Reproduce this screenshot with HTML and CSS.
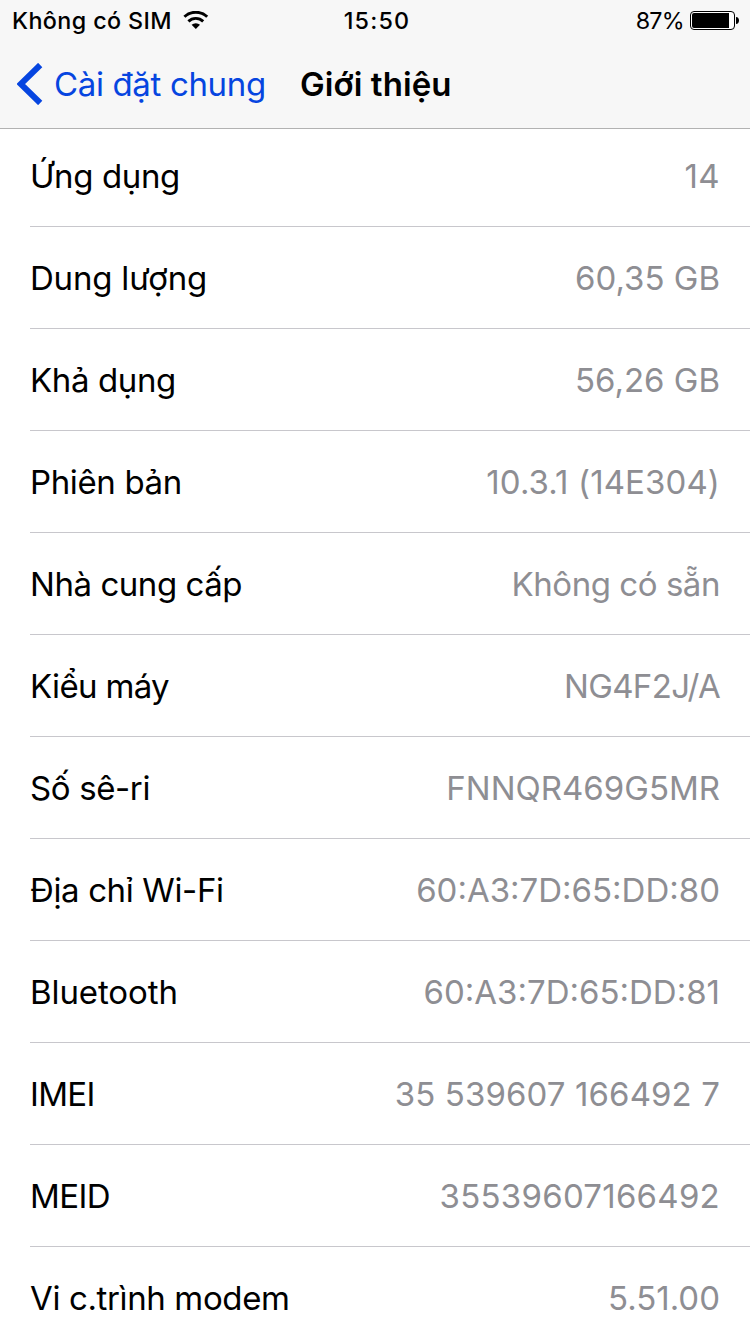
FILE: index.html
```html
<!DOCTYPE html>
<html lang="vi">
<head>
    <meta charset="UTF-8">
    <title>Giới thiệu</title>
    <link rel="stylesheet" href="styles.css">
</head>
<body>
    <header class="header">
        <div class="status">
            <div class="carrier">
                <span>Không có SIM</span>
                <svg class="wifi" width="26" height="18" viewBox="0 0 26 18">
                    <path d="M1.4 5.8a16.5 16.5 0 0 1 22.8 0M5.4 10.4a10.6 10.6 0 0 1 14.8 0" fill="none" stroke="#000" stroke-width="2.9"/>
                    <path d="M12.8 18l-4.2-4.2a6.2 6.2 0 0 1 8.4 0z"/>
                </svg>
            </div>
            <span class="time">15:50</span>
            <div class="power">
                <span>87%</span>
                <svg class="battery" width="49" height="19" viewBox="0 0 49 19">
                    <rect x="0.5" y="0.5" width="44" height="18" rx="3.5" fill="#fff" stroke="#000"/>
                    <path d="M4 2h35v15H4a2 2 0 0 1-2-2V4a2 2 0 0 1 2-2z"/>
                    <path d="M46 6c4 0 4 7 0 7z"/>
                </svg>
            </div>
        </div>
        <nav class="nav">
            <a class="back">
                <svg class="arrow" width="26" height="42" viewBox="0 0 26 42">
                    <path d="M23.2 2L3.7 21l19.5 19" fill="none" stroke="#0645e0" stroke-width="6"/>
                </svg>
                <span>Cài đặt chung</span>
            </a>
            <h1 class="title">Giới thiệu</h1>
        </nav>
    </header>
    <ul class="list">
        <li class="apps"><span>Ứng dụng</span><em>14</em></li>
        <li class="capacity"><span>Dung lượng</span><em>60,35 GB</em></li>
        <li><span>Khả dụng</span><em>56,26 GB</em></li>
        <li class="version"><span>Phiên bản</span><em>10.3.1 (14E304)</em></li>
        <li class="network"><span>Nhà cung cấp</span><em>Không có sẵn</em></li>
        <li class="model"><span>Kiểu máy</span><em>NG4F2J/A</em></li>
        <li><span>Số sê-ri</span><em>FNNQR469G5MR</em></li>
        <li><span>Địa chỉ Wi-Fi</span><em>60:A3:7D:65:DD:80</em></li>
        <li class="bluetooth"><span>Bluetooth</span><em>60:A3:7D:65:DD:81</em></li>
        <li class="imei"><span>IMEI</span><em>35 539607 166492 7</em></li>
        <li class="meid"><span>MEID</span><em>35539607166492</em></li>
        <li><span>Vi c.trình modem</span><em>5.51.00</em></li>
    </ul>
</body>
</html>
```
FILE: styles.css
```css
*{
    margin: 0;
    padding: 0;
    list-style: none;
    box-sizing: border-box;
}
html,body{
    width: 100%;
    height: 100%;
    overflow: hidden;
}
body{
    background: #fff;
    color: #000;
    font-family: Inter, "Liberation Sans", sans-serif;
}
.header{
    height: 129px;
    background: #f7f7f7;
    border-bottom: 1px solid #b2b2b2;
}
.status{
    display: grid;
    grid-template-columns: 1fr auto 1fr;
    height: 41px;
    padding: 0 11px 0 12px;
    line-height: 42px;
    font-size: 23.3px;
    font-weight: 500;
}
.carrier,.power{
    display: flex;
    align-items: center;
}
.wifi,.battery{
    margin-bottom: 2px;
}
.carrier{
    gap: 11px;
    font-weight: 550;
    letter-spacing: 0.4px;
}
.time{
    padding-left: 3px;
    font-weight: 550;
    letter-spacing: 1.2px;
}
.power{
    justify-content: flex-end;
    gap: 6px;
    font-weight: 400;
    letter-spacing: -0.7px;
}
.nav{
    display: flex;
    height: 87px;
    padding-left: 17px;
    line-height: 87px;
    font-size: 33px;
}
.back{
    display: flex;
    align-items: center;
    gap: 11px;
    width: 283px;
    color: #0645e0;
    white-space: nowrap;
    letter-spacing: -0.35px;
}
.arrow{
    margin-bottom: 2px;
}
.title{
    font-size: 33px;
    font-weight: 600;
    letter-spacing: 0.1px;
}
.list{
    padding-left: 30px;
}
.list li{
    display: flex;
    justify-content: space-between;
    height: 102px;
    padding-right: 30px;
    line-height: 103px;
    border-bottom: 1px solid #c8c7cc;
    font-size: 33px;
}
.list .apps{
    height: 98px;
    line-height: 95px;
}
.list span{
    letter-spacing: -0.37px;
}
.list em{
    color: #8e8e93;
    font-style: normal;
}
.apps em{
    letter-spacing: 0.4px;
}
.capacity span{
    letter-spacing: -0.2px;
}
.version em{
    letter-spacing: 0.1px;
}
.network span,.network em{
    letter-spacing: -0.45px;
}
.model span,.model em,.imei span{
    letter-spacing: -0.65px;
}
.bluetooth span{
    letter-spacing: -0.1px;
}
.imei em{
    letter-spacing: 0.1px;
}
.meid span{
    letter-spacing: -0.6px;
}
.meid em{
    letter-spacing: 0.25px;
}
```
